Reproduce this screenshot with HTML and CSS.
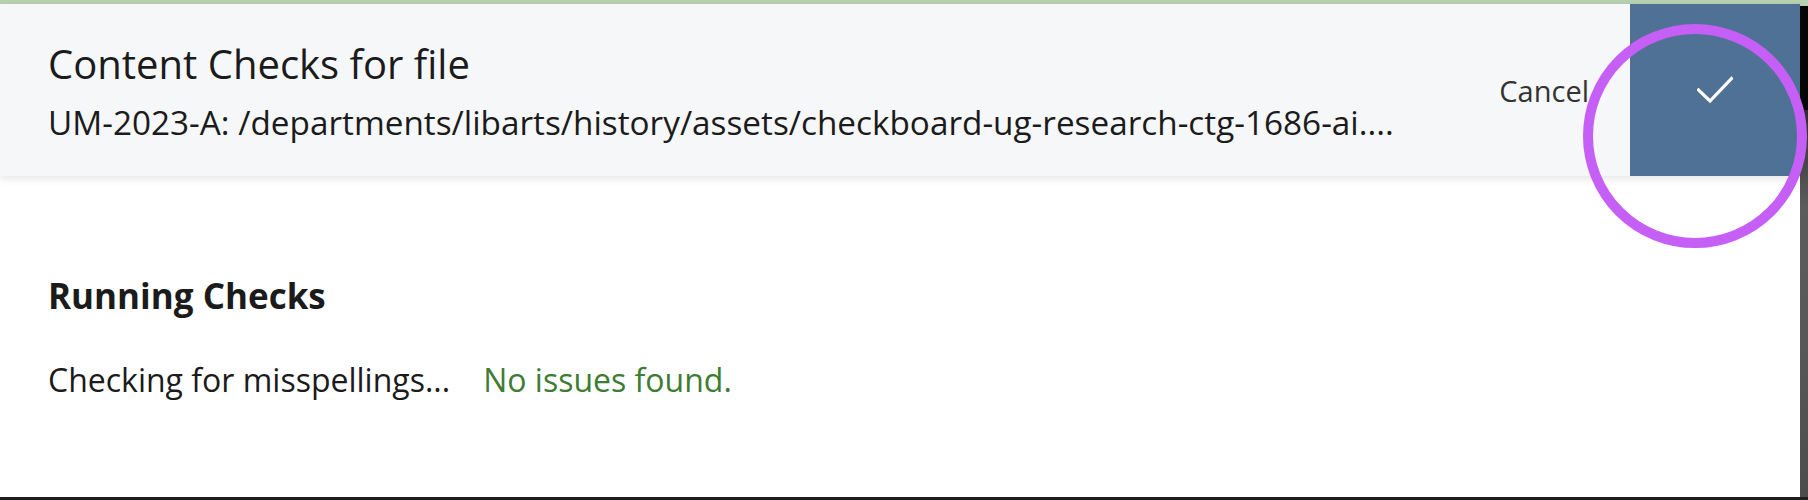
FILE: index.html
```html
<!DOCTYPE html>
<html lang="en">
<head>
<meta charset="utf-8">
<title>Content Checks</title>
<link rel="stylesheet" href="styles.css">
</head>
<body>
<div class="screen">
  <div class="topline"></div>
  <div class="main">
    <div class="panel">
      <header class="header">
        <div class="titles">
          <h1 class="title">Content Checks for file</h1>
          <p class="path">UM-2023-A: /departments/libarts/history/assets/checkboard-ug-research-ctg-1686-ai....</p>
        </div>
        <div class="actions">
          <button class="cancel" type="button">Cancel</button>
          <button class="confirm" type="button" aria-label="Confirm">
            <svg width="36" height="28" viewBox="0 0 36 28"><polyline points="1.5,14 13,25 34.5,2.5" fill="none" stroke="#ffffff" stroke-width="3.2" stroke-linecap="square"/></svg>
          </button>
        </div>
      </header>
      <section class="content">
        <h2 class="section-title">Running Checks</h2>
        <div class="check-row">
          <span class="check-label">Checking for misspellings...</span>
          <span class="check-result">No issues found.</span>
        </div>
      </section>
    </div>
    <div class="backdrop">
      <div class="backdrop-top"></div>
      <div class="backdrop-rest"></div>
    </div>
  </div>
  <div class="bottomline"></div>
  <div class="highlight"></div>
</div>
</body>
</html>
```
FILE: styles.css
```css
* { box-sizing: border-box; }
html, body { margin: 0; padding: 0; background: #ffffff; }
body { font-family: "Open Sans", "Noto Sans", sans-serif; color: #1c1c1c; }

.screen {
  position: relative;
  width: 1808px;
  height: 500px;
  display: flex;
  flex-direction: column;
  overflow: hidden;
}

.topline { height: 4px; background: #b8d1b2; flex: none; }

.main { flex: 1; display: flex; min-height: 0; }

.panel { width: 1800px; flex: none; background: #ffffff; display: flex; flex-direction: column; }

.header {
  position: relative;
  z-index: 1;
  height: 172px;
  flex: none;
  background: #f6f7f9;
  box-shadow: 0 3px 8px rgba(0, 0, 0, 0.10);
  display: flex;
  align-items: flex-start;
  justify-content: space-between;
  padding-left: 48px;
}

.titles { display: flex; flex-direction: column; gap: 14px; margin-top: 36px; }
.title { margin: 0; font-size: 40px; line-height: 48px; font-weight: 400; color: #1b1b1b; }
.path { margin: 0; font-size: 33.3px; line-height: 40px; color: #1b1b1b; }

.actions { align-self: stretch; display: flex; align-items: center; }

.cancel {
  font-family: inherit;
  font-size: 29px;
  color: #333333;
  background: none;
  border: 0;
  padding: 0;
  margin-right: 41px;
  cursor: pointer;
}

.confirm {
  width: 170px;
  height: 100%;
  border: 0;
  padding: 0;
  background: #4f7196;
  display: flex;
  align-items: center;
  justify-content: center;
  cursor: pointer;
}
.confirm svg { display: block; }

.content { padding: 100px 48px 0; }
.section-title { margin: 0; font-size: 35px; line-height: 40px; font-weight: 700; color: #1b1b1b; }
.check-row { margin-top: 44px; display: flex; gap: 33px; font-size: 32px; line-height: 40px; }
.check-label { color: #1b1b1b; }
.check-result { color: #3e7c33; }

.backdrop { width: 8px; flex: none; display: flex; flex-direction: column; padding-top: 2px; background: #b8d1b2; }
.backdrop-top { height: 104px; background: #060606; }
.backdrop-rest { flex: 1; background: linear-gradient(180deg, #2e2e2e 0%, #5c5c5c 25%, #585858 60%, #4c4c4c 100%); }

.bottomline { height: 3px; background: #1e1e1e; flex: none; }

.highlight {
  position: absolute;
  left: 1583px;
  top: 24px;
  width: 224px;
  height: 224px;
  border: 10px solid #c65ff6;
  border-radius: 50%;
  pointer-events: none;
  z-index: 5;
}
```
